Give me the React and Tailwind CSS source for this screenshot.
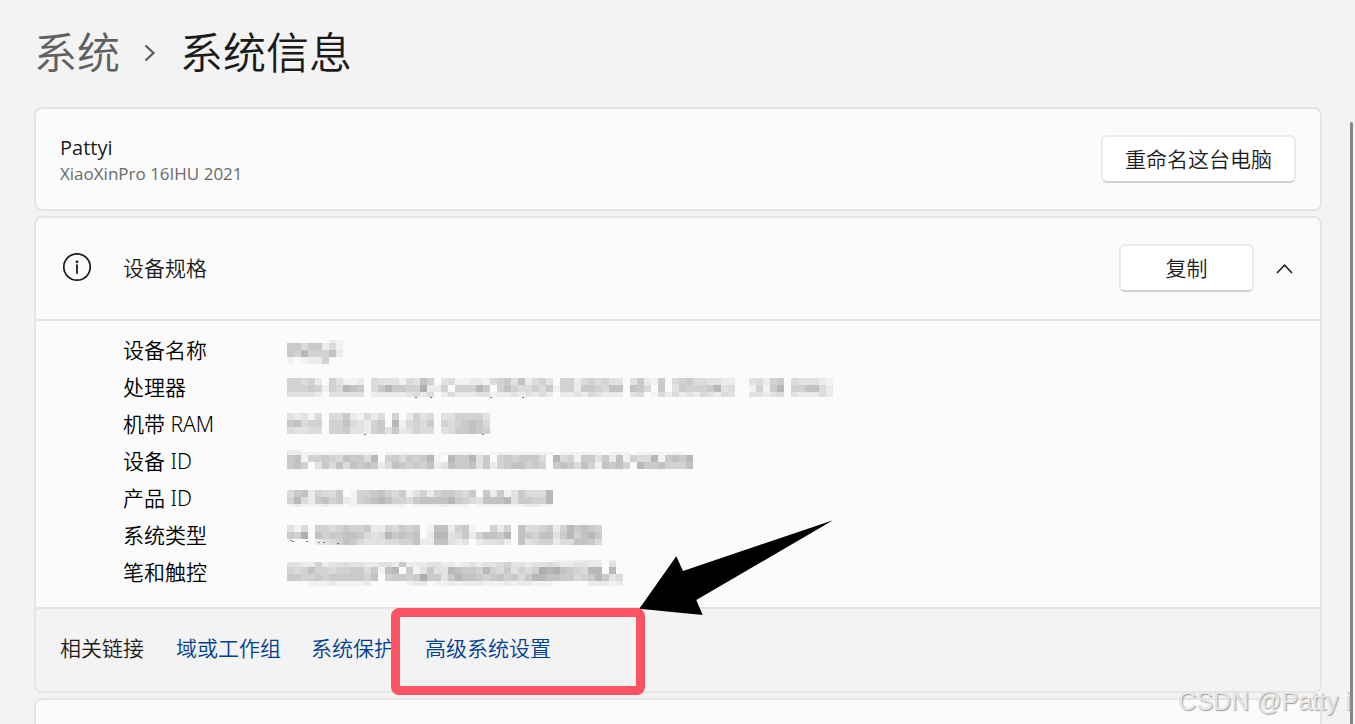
import React, { useState } from "react";

// Each digit is the darkness of one 7px block, 0 leaves the block empty
const SHADES = ["none", "#f2f2f2", "#ebebeb", "#e2e2e2", "#dbdbdb", "#d2d2d2", "#cacaca", "#c2c2c2", "#b8b8b8", "#aeaeae"];

const specs = [
  {
    label: "设备名称",
    bands: [
      { y: 8, h: 3, cells: "00000021" },
      { y: 11, h: 7, cells: "66466241" },
      { y: 18, h: 7, cells: "65855572" },
      { y: 25, h: 7, cells: "10122500" },
    ],
  },
  {
    label: "处理器",
    bands: [
      { y: 9, h: 7, cells: "554520531120433314375034112214563724530552454533036216045644332200342560433321" },
      { y: 16, h: 7, cells: "555651548760468665592250555860575445461552665477076406036555683400151680557742" },
      { y: 23, h: 5, cells: "333320333330222223424024222331223232420223243222034014242324324300332340322242" },
    ],
    specks: [[128, 28], [143, 28], [203, 28], [235, 28]],
  },
  {
    label: "机带 RAM",
    bands: [
      { y: 7, h: 7, cells: "32314044621424050253403355553" },
      { y: 14, h: 7, cells: "67455055743256081454605456764" },
      { y: 21, h: 7, cells: "43344055633256362354403466765" },
    ],
    specks: [[77, 28], [195, 28]],
  },
  {
    label: "设备 ID",
    bands: [
      { y: 7, h: 2, cells: "22" },
      { y: 9, h: 3, cells: "2211111111111011111110111111011111111101111110111011111110" },
      { y: 12, h: 7, cells: "6715565476648056465681086683605656664084516636271544816768" },
      { y: 19, h: 7, cells: "6750364747676247656572376673625677565067647517675086675557" },
    ],
  },
  {
    label: "产品 ID",
    bands: [
      { y: 10, h: 7, cells: "46725446015567546135256654606261364448" },
      { y: 17, h: 7, cells: "58426756215678755467777865437778366558" },
      { y: 24, h: 3, cells: "12111211011111111011112111011111112211" },
    ],
  },
  {
    label: "系统类型",
    bands: [
      { y: 8, h: 7, cells: "314055456556225465601772561005250744562586765" },
      { y: 15, h: 7, cells: "659075667764348676702883462577680765773685786" },
      { y: 22, h: 6, cells: "000023457643334455722773230233420734552447764" },
    ],
    specks: [[3, 23], [5, 24], [19, 24], [31, 25], [36, 25], [50, 26]],
  },
  {
    label: "笔和触控",
    bands: [
      { y: 6, h: 2, cells: "000000000000000000000000000000000000001112222020" },
      { y: 8, h: 5, cells: "332252334332233262223322123233453323343223322030" },
      { y: 13, h: 7, cells: "545755455664617806136338766585463545989765488080" },
      { y: 20, h: 7, cells: "665565666665705665696636877656756468877664568634" },
      { y: 27, h: 5, cells: "000111211112000001220112122211121221110000022212" },
    ],
  },
];

const links = ["域或工作组", "系统保护", "高级系统设置"];

const Mosaic = ({ bands, specks = [] }) => (
  <svg width="560" height="37" className="block" shapeRendering="crispEdges" aria-hidden="true">
    {bands.map((band) =>
      band.cells.split("").map((c, i) =>
        c === "0" ? null : (
          <rect key={`${band.y}-${i}`} x={i * 7} y={band.y} width="7" height={band.h} fill={SHADES[c]} />
        )
      )
    )}
    {specks.map(([x, y]) => (
      <rect key={`${x}-${y}`} x={x} y={y} width="2" height="1" fill="#777777" />
    ))}
  </svg>
);

const InfoIcon = () => (
  <svg width="30" height="30" viewBox="0 0 30 30" fill="none" aria-hidden="true">
    <circle cx="15" cy="14" r="13.2" stroke="#1b1b1b" strokeWidth="1.7" />
    <circle cx="15" cy="8.8" r="1.4" fill="#1b1b1b" />
    <path d="M15 12.2V20" stroke="#1b1b1b" strokeWidth="1.8" strokeLinecap="round" />
  </svg>
);

const Button = ({ children, className }) => (
  <button
    className={`h-12 rounded-md border-2 border-[#ebebeb] border-b-[#d0d0d0] bg-white text-[21px] leading-7 text-[#1b1b1b] ${className}`}
  >
    {children}
  </button>
);

const App = () => {
  const [open, setOpen] = useState(true);

  return (
    <div className="relative h-screen overflow-hidden bg-[#f3f3f3] pl-[34px] pr-[33px] font-['Noto_Sans','Noto_Sans_CJK_SC',sans-serif] font-[350] text-[#1b1b1b]">
      {/* Breadcrumb */}
      <nav className="flex h-[107px] items-center pb-0.5 text-[43px] leading-none">
        <a href="#system" className="text-[#5f5f5f]">系统</a>
        <svg width="12" height="18" viewBox="0 0 12 18" fill="none" className="mx-6" aria-hidden="true">
          <path d="M1.5 1.5L9.5 9L1.5 16.5" stroke="#5a5a5a" strokeWidth="2.2" />
        </svg>
        <h1 className="font-[350]">系统信息</h1>
      </nav>

      <main className="flex flex-col gap-[5px]">
        {/* Computer name */}
        <section className="flex h-[104px] items-center justify-between rounded-lg border-2 border-[#e5e5e5] bg-[#fbfbfb] px-6">
          <div className="pt-0.5 font-['Open_Sans',sans-serif] font-normal">
            <p className="text-[20px] leading-7">Pattyi</p>
            <p className="text-[17px] leading-6 text-[#6a6a6a]">XiaoXinPro 16IHU 2021</p>
          </div>
          <Button className="px-[22px]">重命名这台电脑</Button>
        </section>

        {/* Device specs */}
        <section className="rounded-lg border-2 border-[#e5e5e5] bg-[#fbfbfb]">
          <header className="flex h-[101px] items-center pr-[25px] pb-0.5 pl-[26px]">
            <InfoIcon />
            <h2 className="ml-[31px] text-[21px] leading-7 font-[350]">设备规格</h2>
            <Button className="ml-auto w-[135px]">复制</Button>
            <button aria-label="设备规格" aria-expanded={open} onClick={() => setOpen(!open)} className="ml-[21px] py-3">
              <svg width="20" height="12" viewBox="0 0 20 12" fill="none" className={open ? "" : "rotate-180"}>
                <path d="M2 11L9.5 3.2L17 11" stroke="#1b1b1b" strokeWidth="1.5" />
              </svg>
            </button>
          </header>

          {open && (
            <table className="block border-t-2 border-[#e5e5e5] pt-[11px] pb-4 pl-[87px] text-[21px] leading-7 text-black">
              <tbody>
                {specs.map((s) => (
                  <tr key={s.label} className="h-[37px]">
                    <th scope="row" className="w-[164px] p-0 pb-0.5 text-left font-[350]">{s.label}</th>
                    <td className="p-0">
                      <Mosaic bands={s.bands} specks={s.specks} />
                    </td>
                  </tr>
                ))}
              </tbody>
            </table>
          )}

          <footer className="relative flex h-[84px] items-center gap-[30px] rounded-b-md border-t-2 border-[#e5e5e5] bg-[#f3f3f3] pb-1 pl-6 text-[21px] leading-7">
            <span className="pr-0.5">相关链接</span>
            {links.map((l) => (
              <a key={l} href="#related" className="text-[#003e92]">{l}</a>
            ))}

            {/* Highlight box and arrow */}
            <div className="pointer-events-none absolute -top-px left-[355px] h-[87px] w-[254px] rounded-lg border-9 border-[#ff5364]" />
            <svg width="196" height="98" viewBox="0 0 196 98" className="pointer-events-none absolute bottom-[75px] left-[602px]" aria-hidden="true">
              <path d="M1.3 90.7L38.3 38.3L45 53L195 2.3L58.3 82L64.7 97Z" fill="#000000" />
            </svg>
          </footer>
        </section>

        <section className="h-[104px] rounded-lg border-2 border-[#e5e5e5] bg-[#fbfbfb]" />
      </main>

      <div className="absolute top-[122px] right-0.5 bottom-0 w-[3px] rounded-t-full bg-[#868686]" />
      <p className="absolute right-1 bottom-[5px] font-['Liberation_Sans',sans-serif] text-[25px] leading-9 text-[#e4e4e4] [text-shadow:1px_1px_1px_#a0a0a0]">
        CSDN @Patty i
      </p>
    </div>
  );
};

export default App;
